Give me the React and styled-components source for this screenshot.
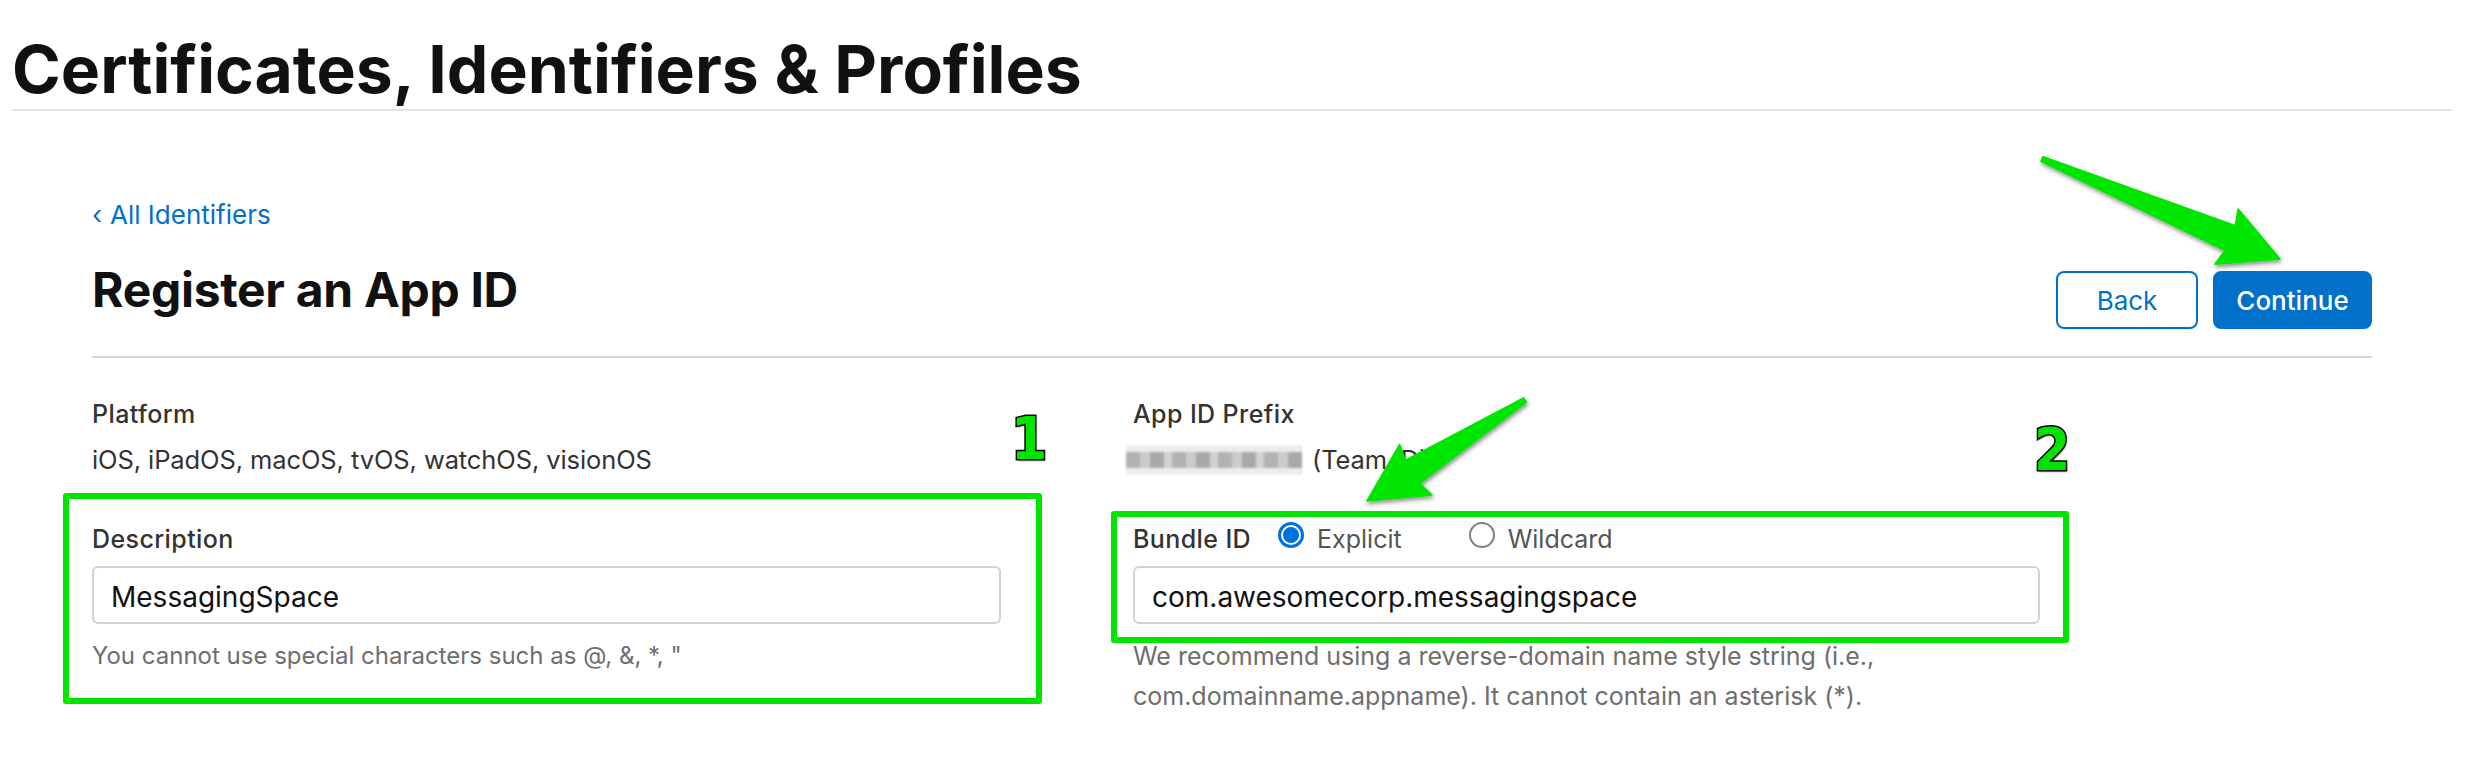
import React from "react";
import styled, { createGlobalStyle } from "styled-components";

const GlobalStyle = createGlobalStyle`
  html, body {
    margin: 0;
    padding: 0;
    background: #fff;
  }
  body {
    font-family: Inter, "Noto Sans", "Liberation Sans", sans-serif;
    color: #1d1d1f;
  }
`;

const GREEN = "#00e500";
const BLUE = "#0070c9";

// arrows drawn over the screenshot, tail -> tip in page pixels
const arrows = [
  { tail: [2042, 159], tip: [2280, 259] },
  { tail: [1525, 400], tip: [1367, 501] },
];

const arrowPath = (tail, tip) => {
  const L = 58;
  const Ln = 54;
  const hw = 30;
  const sw = 13.5;
  const tw = 2.6;
  const dx = tip[0] - tail[0];
  const dy = tip[1] - tail[1];
  const len = Math.hypot(dx, dy);
  const d = [dx / len, dy / len];
  const n = [-d[1], d[0]];
  const at = (base, along, side) => [
    base[0] + d[0] * along + n[0] * side,
    base[1] + d[1] * along + n[1] * side,
  ];
  const pts = [
    at(tail, 0, tw),
    at(tip, -Ln, sw),
    at(tip, -L, hw),
    tip,
    at(tip, -L, -hw),
    at(tip, -Ln, -sw),
    at(tail, 0, -tw),
  ];
  return "M" + pts.map((p) => p[0].toFixed(1) + " " + p[1].toFixed(1)).join(" L") + " Z";
};

const App = () => {
  return (
    <Page>
      <GlobalStyle />
      <Header>
        <Title>Certificates, Identifiers &amp; Profiles</Title>
      </Header>

      <Main>
        <BackLink href="#">
          <Chevron>‹</Chevron>All Identifiers
        </BackLink>

        <HeadRow>
          <Heading>Register an App ID</Heading>
          <Actions>
            <Button>Back</Button>
            <Button primary>Continue</Button>
          </Actions>
        </HeadRow>

        <FormGrid>
          <Column>
            <Label>Platform</Label>
            <Value>iOS, iPadOS, macOS, tvOS, watchOS, visionOS</Value>
            <Field>
              <Label>Description</Label>
              <Input defaultValue="MessagingSpace" />
              <Help>You cannot use special characters such as @, &amp;, *, "</Help>
            </Field>
          </Column>

          <Column>
            <Label>App ID Prefix</Label>
            <Value>
              <Blurred />
              (Team ID)
            </Value>
            <Field>
              <LabelRow>
                <Label>Bundle ID</Label>
                <RadioOption>
                  <Radio checked />
                  Explicit
                </RadioOption>
                <RadioOption>
                  <Radio />
                  Wildcard
                </RadioOption>
              </LabelRow>
              <Input defaultValue="com.awesomecorp.messagingspace" />
              <Help wide>
                We recommend using a reverse-domain name style string (i.e.,
                com.domainname.appname). It cannot contain an asterisk (*).
              </Help>
            </Field>
          </Column>
        </FormGrid>
      </Main>

      <Highlight x={63} y={493} w={979} h={211} />
      <Highlight x={1111} y={511} w={958} h={132} />
      <Marker x={1011} y={404}>1</Marker>
      <Marker x={2034} y={415}>2</Marker>

      <Overlay width="2484" height="766" viewBox="0 0 2484 766">
        <defs>
          <filter id="arrowShadow" x="-10%" y="-10%" width="130%" height="140%">
            <feDropShadow dx="1" dy="2.5" stdDeviation="2" floodColor="#000" floodOpacity="0.45" />
          </filter>
        </defs>
        {arrows.map((a, i) => (
          <path
            key={i}
            d={arrowPath(a.tail, a.tip)}
            fill={GREEN}
            stroke={GREEN}
            strokeWidth="1.5"
            strokeLinejoin="round"
            filter="url(#arrowShadow)"
          />
        ))}
      </Overlay>
    </Page>
  );
};

export default App;

const Page = styled.div`
  position: relative;
  width: 2484px;
  min-height: 766px;
  overflow: hidden;
`;

const Header = styled.header`
  margin: 0 32px 0 12px;
  padding-top: 29px;
  border-bottom: 2px solid #e4e4e4;
`;

const Title = styled.h1`
  margin: 0;
  font-size: 66px;
  line-height: 80px;
  font-weight: 700;
  letter-spacing: 0;
  color: #111;
`;

const Main = styled.main`
  padding: 0 112px 0 92px;
`;

const BackLink = styled.a`
  display: block;
  margin-top: 88px;
  font-size: 26px;
  line-height: 32px;
  color: ${BLUE};
  text-decoration: none;
`;

const Chevron = styled.span`
  display: inline-block;
  width: 18px;
`;

const HeadRow = styled.div`
  display: flex;
  justify-content: space-between;
  align-items: flex-start;
  margin-top: 30px;
  padding-bottom: 27px;
  border-bottom: 2px solid #d7d7d7;
`;

const Heading = styled.h2`
  margin: 0;
  font-size: 48px;
  line-height: 58px;
  font-weight: 700;
  letter-spacing: -0.3px;
  color: #111;
`;

const Actions = styled.div`
  display: flex;
  gap: 15px;
  margin-top: 10px;
`;

const Button = styled.button`
  box-sizing: border-box;
  height: 58px;
  min-width: ${(p) => (p.primary ? "159px" : "142px")};
  border: 2px solid ${BLUE};
  border-radius: 8px;
  background: ${(p) => (p.primary ? BLUE : "#fff")};
  color: ${(p) => (p.primary ? "#fff" : BLUE)};
  font-family: inherit;
  font-size: 26px;
  font-weight: ${(p) => (p.primary ? 500 : 400)};
  cursor: pointer;
`;

const FormGrid = styled.div`
  display: grid;
  grid-template-columns: 909px 907px;
  column-gap: 132px;
  padding-top: 41px;
`;

const Column = styled.div`
  display: flex;
  flex-direction: column;
`;

const Label = styled.div`
  font-size: 25px;
  line-height: 30px;
  font-weight: 500;
  letter-spacing: 0.4px;
  color: #333;
`;

const Value = styled.div`
  display: flex;
  align-items: center;
  gap: 10px;
  margin-top: 15px;
  font-size: 25.5px;
  line-height: 32px;
  letter-spacing: -0.1px;
  color: #333;
`;

const Blurred = styled.span`
  display: inline-block;
  margin-left: -7px;
  width: 176px;
  height: 30px;
  background:
    linear-gradient(#ececec 0 22%, transparent 22% 78%, #ededed 78%),
    repeating-linear-gradient(
      90deg,
      #b2b2b2 0 14px,
      #cbcbcb 14px 24px,
      #a9a9a9 24px 38px,
      #d2d2d2 38px 46px
    );
  filter: blur(1.2px);
`;

const Field = styled.div`
  display: flex;
  flex-direction: column;
  margin-top: 48px;
`;

const LabelRow = styled.div`
  display: flex;
  align-items: center;
  gap: 27px;
`;

const RadioOption = styled.label`
  display: flex;
  align-items: center;
  gap: 13px;
  margin-right: 40px;
  font-size: 25px;
  line-height: 30px;
  color: #555;
`;

const Radio = styled.span`
  box-sizing: border-box;
  width: 26px;
  height: 26px;
  margin-top: -8px;
  border-radius: 50%;
  border: ${(p) => (p.checked ? "3px solid #0071e3" : "2px solid #808080")};
  background: ${(p) => (p.checked ? "radial-gradient(circle, #0071e3 0 7.5px, #fff 8.5px)" : "#fff")};
`;

const Input = styled.input`
  box-sizing: border-box;
  width: 100%;
  height: 58px;
  margin-top: 12px;
  padding: 4px 17px 0;
  border: 2px solid #d2d2d2;
  border-radius: 6px;
  font-family: inherit;
  font-size: 28px;
  line-height: 50px;
  color: #111;
  outline: none;
`;

const Help = styled.div`
  margin-top: 12px;
  font-size: ${(p) => (p.wide ? "25px" : "24px")};
  line-height: 40px;
  color: #6e6e6e;
`;

const Highlight = styled.div`
  position: absolute;
  left: ${(p) => p.x}px;
  top: ${(p) => p.y}px;
  width: ${(p) => p.w}px;
  height: ${(p) => p.h}px;
  box-sizing: border-box;
  border: 6px solid ${GREEN};
  border-radius: 3px;
  pointer-events: none;
`;

const Marker = styled.span`
  position: absolute;
  left: ${(p) => p.x}px;
  top: ${(p) => p.y}px;
  font-family: "Liberation Sans Narrow", "DejaVu Sans Condensed", "Liberation Sans", sans-serif;
  font-size: 58px;
  line-height: 70px;
  font-weight: 700;
  color: ${GREEN};
  -webkit-text-stroke: 3px #000;
  paint-order: stroke fill;
  text-shadow: 1px 2px 2px rgba(0, 0, 0, 0.4);
`;

const Overlay = styled.svg`
  position: absolute;
  left: 0;
  top: 0;
  pointer-events: none;
`;
